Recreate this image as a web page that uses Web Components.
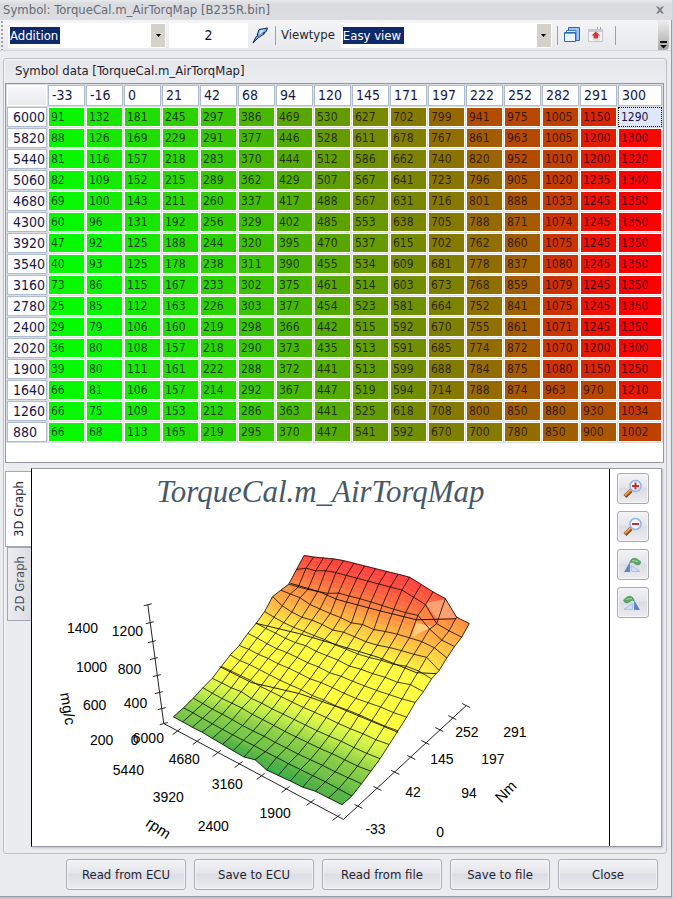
<!DOCTYPE html>
<html lang="en">
<head>
<meta charset="utf-8">
<meta name="viewport" content="width=device-width">
<title>Symbol: TorqueCal.m_AirTorqMap [B235R.bin]</title>
<style>
body{margin:0;background:#ebecef;color:#1e1e32;font:13px/16px "DejaVu Sans Condensed","DejaVu Sans",sans-serif}
</style>
</head>
<body>
<map-window></map-window>

<template id="t-window">
<style>
:host{display:flex;flex-direction:column;min-height:100vh;box-sizing:border-box;border-right:2px solid #d4d5d9;border-bottom:2px solid #c4c5ca;background:#ebecf0;box-shadow:inset -1px -1px #9a9ca4}
header{display:flex;align-items:center;justify-content:space-between;height:20px;padding:0 7px 0 3px;background:linear-gradient(#e8e9eb,#dadbdf 4px,#dcdde0);color:#666a74}
h1{margin:0;font:inherit}
.close{display:flex;padding:0;border:0;background:none}
group-box{margin:7px 5px 0 3px;flex:1}
footer{display:flex;justify-content:flex-end;gap:8px;padding:5px 14px 7px}
footer push-button{flex:0 0 120px}
footer push-button.s{flex-basis:100px}
</style>
<header><h1>Symbol: TorqueCal.m_AirTorqMap [B235R.bin]</h1>
<button class="close" aria-label="Close window"><svg width="10" height="10" viewBox="0 0 10 10"><path d="M1 1.5h2.3L5 3.4l1.7-1.9H9L6.2 5 9 8.5H6.7L5 6.6 3.3 8.5H1L3.8 5z" fill="#7b7e87"/></svg></button></header>
<tool-bar></tool-bar>
<group-box heading="Symbol data [TorqueCal.m_AirTorqMap]">
<map-table></map-table>
<graph-tabs></graph-tabs>
</group-box>
<footer>
<push-button>Read from ECU</push-button><push-button>Save to ECU</push-button><push-button>Read from file</push-button><push-button class="s">Save to file</push-button><push-button class="s">Close</push-button>
</footer>
</template>

<template id="t-toolbar">
<style>
:host{display:flex;align-items:center;height:30px;padding:0 2px 0 8px;margin-right:1px;background:radial-gradient(circle at 2px 2px,#a2a4ac 1px,transparent 1px) 0 4px/4px 4px repeat-y,linear-gradient(#f4f4f6,#e8e9ec);border-bottom:1px solid #d3d4d9}
combo-field{flex:0 0 158px}
combo-field.view{flex-basis:211px;margin-left:6px}
.num{width:79px;height:25px;margin:0 4px 0 3px;padding:0;border:0;background:#fff;text-align:center;font:14px/25px "DejaVu Sans Condensed","DejaVu Sans",sans-serif;color:#111;box-sizing:border-box}
button{display:flex;padding:0;border:0;background:none}
.sep{width:1px;height:19px;background:#9da0a9;margin:0 5px}
.more{margin-left:auto;align-self:stretch;width:11px;align-items:flex-end;justify-content:center;background:linear-gradient(#eeeeef,#a9a8a6);border-radius:0 0 4px 0}
.gap{width:7px}
.execute{margin-right:1px}
</style>
<combo-field label="Operation" value="Addition" mark="50"></combo-field>
<input class="num" type="text" value="2" aria-label="Operand">
<button class="execute" aria-label="Execute"><svg width="17" height="17" viewBox="0 0 17 17"><path d="M7 2.500 15.500 1l-1.200 3.500-3.300 1.900 1.600.2-6.300 4.200L1 15.800l3.200-6.200 2-1-1.200-.4z" fill="#7fa8e4" stroke="#14285c"/><path d="M8 3.500l5-1L7.500 7.500z" fill="#d6e6fb"/></svg></button>
<span class="sep"></span>
<label>Viewtype</label>
<combo-field class="view" label="Viewtype" value="Easy view" mark="61"></combo-field>
<span class="sep"></span>
<button aria-label="Copy"><svg width="18" height="18" viewBox="0 0 18 18"><path d="M5.500 1.500h11v13h-11z" fill="#9fc3ef" stroke="#2a66ae"/><path d="M3.500 4.500h9.500v10H3.500z" fill="#d5e7fb" stroke="#3d7dc6"/><path d="M1.500 6.500h11v9h-11z" fill="#eaf4ff" stroke="#2769b6"/><path d="M2 7.500h10" stroke="#6aa2de"/></svg></button>
<span class="gap"></span>
<button aria-label="Export"><svg width="15" height="16" viewBox="0 0 15 16"><path d="M.5 2.500h14v12H.5z" fill="#f3f4f7" stroke="#c3c7d0"/><path d="M1 3h13v2H1z" fill="#c9ccd4"/><path d="M9 1h1M12 1h1" stroke="#555"/><path d="M7.800 4.500l4.400 4h-2v3H5.500v-3h-2z" fill="#d93636"/><path d="M5 13h7" stroke="#d4d7de"/></svg></button>
<span class="gap"></span>
<span class="sep"></span>
<button class="more" aria-label="More"><svg width="7" height="9" viewBox="0 0 7 9"><path d="M0 1h7" stroke="#111" stroke-width="2"/><path d="M0 4h7L3.500 7.500z" fill="#111"/></svg></button>
</template>

<template id="t-combo">
<style>
:host{display:grid;grid-template-columns:1fr 15px;height:25px;background:#fff;align-items:center}
select{grid-area:1/1/2/3;appearance:none;width:100%;height:17px;border:0;padding:0 0 0 2px;margin:0;outline:0;color:#fff;font:13px/17px "DejaVu Sans Condensed","DejaVu Sans",sans-serif;background:linear-gradient(#0f2a6b,#0f2a6b) 2px 0/var(--mark) 17px no-repeat}
option{color:#000}
i{grid-area:1/2;display:grid;place-items:center;height:23px;width:14px;background:#d4d1c9;pointer-events:none;z-index:1}
</style>
<select></select><i><svg width="5" height="3"><path d="M0 0h5L2.500 3z" fill="#000"/></svg></i>
</template>

<template id="t-group">
<style>
:host{display:block;border:1px solid #bdbfc7;border-radius:3px;box-shadow:inset 1px 1px #f4f5f7;padding:0 4px 4px 1px;background:linear-gradient(#e5e6ea,#ebecf0 24px)}
h2{margin:0;padding:4px 11px 4px 10px;font:13px/16px "DejaVu Sans Condensed","DejaVu Sans",sans-serif}
</style>
<h2></h2><slot></slot>
</template>

<template id="t-table">
<style>
:host{display:block;border:1px solid #9497a2;background:#fff;padding-bottom:19px;margin-right:-2px}
table{width:100%;table-layout:fixed;border-spacing:1px;background:#d9dee4;color:rgba(16,4,40,.76);font-size:12px;line-height:18px}
td,th{padding:0 0 0 2px;border:1px solid #fff;text-align:left;font-weight:400;height:18px;box-sizing:content-box}
th{background:#fff;border-color:#aebccd;color:#16164a;font-size:14px}
thead th{height:19px;line-height:19px;padding-left:3px}
tbody th{padding-left:5px}
thead td{background:linear-gradient(#f8f8fa,#e9eaee)}
td.sel{background:#dfe7fa;border:1px dotted #000;color:#16164a}
</style>
<table><colgroup></colgroup><thead></thead><tbody></tbody></table>
</template>

<template id="t-tabs">
<style>
:host{display:grid;grid-template-columns:26px 1fr;margin-top:5px}
.tabs{display:flex;flex-direction:column;align-items:flex-end;padding-top:3px}
.tabs button{writing-mode:vertical-rl;transform:rotate(180deg);width:26px;height:76px;padding:0;border:1px solid #a4a7b0;border-left:0;background:#fff;color:#1e1e32;font:13px/25px "DejaVu Sans Condensed","DejaVu Sans",sans-serif;text-align:center}
.tabs button+button{width:24px;height:74px;line-height:23px;background:linear-gradient(90deg,#dcdde2,#ededf0);color:#4a4d58}
.panel{display:grid;grid-template-columns:1fr 52px;border:1px solid #9a9da6;border-left:1px solid #000;background:#fff;box-shadow:1px 1px 2px #b8bac1}
.side{display:flex;flex-direction:column;gap:7px;border-left:1px solid #000;padding:4px 0 0 7px}
push-button{width:32px}
</style>
<div class="tabs" role="tablist"><button role="tab" aria-selected="true">3D Graph</button><button role="tab" aria-selected="false">2D Graph</button></div>
<div class="panel"><surface-graph></surface-graph>
<div class="side">
<push-button label="Zoom in"><svg width="20" height="20" viewBox="0 0 20 20"><path d="M2 17.500l6-6" stroke="#8a4a22" stroke-width="4"/><path d="M2 16.500l6-6" stroke="#f0a050" stroke-width="2"/><circle cx="12.500" cy="7" r="5.500" fill="#f1f8ff" stroke="#8fb6df" stroke-width="1.500"/><path d="M9 7h7M12.500 3.500v7" stroke="#d22a2a" stroke-width="2"/></svg></push-button>
<push-button label="Zoom out"><svg width="20" height="20" viewBox="0 0 20 20"><path d="M2 17.500l6-6" stroke="#8a4a22" stroke-width="4"/><path d="M2 16.500l6-6" stroke="#f0a050" stroke-width="2"/><circle cx="12.500" cy="7" r="5.500" fill="#f1f8ff" stroke="#8fb6df" stroke-width="1.500"/><path d="M9 7h7" stroke="#d22a2a" stroke-width="2"/></svg></push-button>
<push-button label="Rotate right"><svg width="20" height="20" viewBox="0 0 20 20"><path d="M1 17L7 7v10z" fill="#5f86c9"/><path d="M8.500 16.500v-6l8.500 6z" fill="#cfe0f6" stroke="#a7c2e8"/><path d="M7 8C7 3 13 1.500 16.500 6L18 7l-1 2c-2 1.500-4 1-5.500-.5C10 7 8.500 7 7 8z" fill="#5dab61" stroke="#3d8a47" stroke-width=".6"/><path d="M9 5.500l6 1" stroke="#a5d6a0"/></svg></push-button>
<push-button label="Rotate left"><svg width="20" height="20" viewBox="0 0 20 20"><path d="M17 17L11 7v10z" fill="#5f86c9"/><path d="M9.500 16.500v-6l-8.500 6z" fill="#cfe0f6" stroke="#a7c2e8"/><path d="M11 8C11 3 5 1.500 2 6L.5 7l1 2c2 1.500 4 1 5.500-.5C8.500 7 9.500 7 11 8z" fill="#5dab61" stroke="#3d8a47" stroke-width=".6"/><path d="M9 5.500l-6 1" stroke="#a5d6a0"/></svg></push-button>
</div></div>
</template>

<template id="t-button">
<style>
:host{display:block;height:31px}
button{display:grid;place-items:center;width:100%;height:100%;padding:0;border:1px solid #a9abb4;border-radius:3px;background:linear-gradient(#f3f3f6,#e4e5ea 45%,#dcdde4 50%,#ececf0);box-shadow:inset 0 0 0 1px #f5f5f8;color:#1e1e32;font:13px/16px "DejaVu Sans Condensed","DejaVu Sans",sans-serif}
</style>
<button><slot></slot></button>
</template>

<script>
const MAP = {
  nm: [-33,-16,0,21,42,68,94,120,145,171,197,222,252,282,291,300],
  rpm: [6000,5820,5440,5060,4680,4300,3920,3540,3160,2780,2400,2020,1900,1640,1260,880],
  z: `91 132 181 245 297 386 469 530 627 702 799 941 975 1005 1150 1290
88 126 169 229 291 377 446 528 611 678 767 861 963 1005 1200 1300
81 116 157 218 283 370 444 512 586 662 740 820 952 1010 1200 1320
82 109 152 215 289 362 429 507 567 641 723 796 905 1020 1235 1340
69 100 143 211 260 337 417 488 567 631 716 801 888 1033 1245 1350
60 96 131 192 256 329 402 485 553 638 705 788 871 1074 1245 1350
47 92 125 188 244 320 395 470 537 615 702 762 860 1075 1245 1350
40 93 125 178 238 311 390 455 534 609 681 778 837 1080 1245 1350
73 86 115 167 233 302 375 461 514 603 673 768 859 1079 1245 1350
25 85 112 163 226 303 377 454 523 581 664 752 841 1075 1245 1350
29 79 106 160 219 298 366 442 515 592 670 755 861 1071 1245 1350
36 80 108 157 218 290 373 435 513 591 685 774 872 1070 1200 1300
39 80 111 161 222 288 372 441 513 599 688 784 875 1080 1150 1250
66 81 106 157 214 292 367 447 519 594 714 788 874 963 970 1210
66 75 109 153 212 286 363 441 525 618 708 800 850 880 930 1034
66 68 113 165 219 295 370 447 541 592 670 700 780 850 900 1002`.split('\n').map(r => r.split(' ').map(Number))
};

class Base extends HTMLElement {
  mount(id) {
    const root = this.attachShadow({mode: 'open'});
    root.append(document.getElementById(id).content.cloneNode(true));
    return root;
  }
}

customElements.define('push-button', class extends Base {
  connectedCallback() {
    const b = this.mount('t-button').querySelector('button');
    if (this.hasAttribute('label')) b.setAttribute('aria-label', this.getAttribute('label'));
  }
});

customElements.define('combo-field', class extends Base {
  connectedCallback() {
    const s = this.mount('t-combo').querySelector('select');
    s.add(new Option(this.getAttribute('value')));
    s.setAttribute('aria-label', this.getAttribute('label'));
    s.style.setProperty('--mark', this.getAttribute('mark') + 'px');
  }
});

customElements.define('tool-bar', class extends Base {
  connectedCallback() {
    const r = this.mount('t-toolbar');
    r.querySelector('label').onclick = () => r.querySelector('.view').shadowRoot.querySelector('select').focus();
  }
});

customElements.define('group-box', class extends Base {
  connectedCallback() { this.mount('t-group').querySelector('h2').textContent = this.getAttribute('heading'); }
});

customElements.define('map-table', class extends Base {
  connectedCallback() {
    const r = this.mount('t-table');
    r.querySelector('colgroup').innerHTML = '<col style="width:40px">' + '<col style="width:37px">'.repeat(15) + '<col style="width:44px">';
    r.querySelector('thead').innerHTML = '<tr><td></td>' + MAP.nm.map(n => `<th scope="col">${n}</th>`).join('') + '</tr>';
    r.querySelector('tbody').innerHTML = MAP.z.map((row, i) => `<tr><th scope="row">${MAP.rpm[i]}</th>` + row.map((v, j) => {
      if (!i && j === 15) return `<td class="sel">${v}</td>`;
      const red = Math.max(0, Math.min(255, Math.round(v * 255 / 1350)));
      const k = v < 95 ? Math.round(red / 2) : red;
      return `<td style="background:rgb(${k},${255 - k},0)">${v}</td>`;
    }).join('') + '</tr>').join('');
  }
});

customElements.define('graph-tabs', class extends Base {
  connectedCallback() { this.mount('t-tabs'); }
});

/* Perspective projection of (rpm index, Nm index, mg/c) to the drawing plane. */
const project = (u, v, z) => {
  z /= 100;
  const w = -0.0118871 * u + 0.0136345 * v - 0.00495033 * z + 1;
  return [300 + (10.7107 * u + 8.74836 * v - 0.00941867 * z - 125.8) / w,
          700 + (4.46584 * u - 5.64998 * v - 8.1064 * z + 24.5773) / w];
};
const STOPS = [[25,50,178,70],[66,82,178,66],[91,112,194,70],[160,145,210,70],[215,190,235,70],[290,232,250,70],[370,255,255,60],[660,255,255,66],[740,255,228,66],[800,255,205,66],[900,255,172,66],[1010,255,140,66],[1150,255,102,64],[1300,255,70,64],[1400,255,60,60]];
const shade = z => {
  let i = 1;
  while (i < STOPS.length - 1 && z > STOPS[i][0]) i++;
  const a = STOPS[i - 1], b = STOPS[i], t = Math.max(0, Math.min(1, (z - a[0]) / (b[0] - a[0])));
  return `rgb(${[1, 2, 3].map(k => Math.round(a[k] + (b[k] - a[k]) * t))})`;
};
const height = (u, v) => {
  const j = Math.min(14, Math.floor(v)), t = v - j;
  return MAP.z[u][j] * (1 - t) + MAP.z[u][j + 1] * t;
};
const pt = (u, v) => project(u, v, height(u, v)).map(n => n.toFixed(1)).join();

customElements.define('surface-graph', class extends HTMLElement {
  connectedCallback() {
    let fills = '', lines = '';
    for (let v = 15 - .25; v >= 0; v -= .25) for (let u = 0; u < 15; u++) {
      const c = shade((height(u, v + .125) + height(u + 1, v + .125)) / 2);
      fills += `<path d="M${pt(u, v)}L${pt(u + 1, v)}L${pt(u + 1, v + .25)}L${pt(u, v + .25)}z" fill="${c}" stroke="${c}" stroke-width=".6"/>`;
    }
    const idx = [...Array(16).keys()];
    for (const k of idx) lines += 'M' + idx.map(u => pt(u, k)).join('L') + 'M' + idx.map(v => pt(k, v)).join('L');
    const tick = (pts, dx, dy) => pts.map(([x, y]) => `M${x - dx} ${y - dy}l${2 * dx} ${2 * dy}`).join('');
    const axes = 'M148 605L164 724L344 820L467 706'
      + tick([[148,605],[150,623],[152,642],[154,659],[157,676],[159,693],[162,709],[164,724]], 4, -1)
      + tick([[177,732],[197,742],[217,754],[239,765],[261,777],[286,790],[311,803],[337,818]], 4, -3)
      + tick([[359,807],[378,789],[396,773],[412,758],[426,743],[440,730],[453,718],[467,706]], 4, 2);
    const labels = [[67,633,1400],[112,636,1200],[76,672,1000],[118,674,800],[83,710,600],[124,708,400],[90,745,200],[131,745,0],
      [133,743,6000],[113,776,5440],[169,765,4680],[153,803,3920],[212,790,3160],[198,832,2400],[260,819,1900],
      [366,835,-33],[437,838,0],[406,798,42],[462,799,94],[431,765,145],[482,765,197],[456,737,252],[504,737,291]]
      .map(([x, y, t]) => `<text x="${x}" y="${y}">${t}</text>`).join('');
    this.attachShadow({mode: 'open'}).innerHTML = `<style>
:host{display:block}
svg{display:block;width:100%;height:auto;font:14px "Liberation Sans",sans-serif}
.title{font:italic 31px "Liberation Serif",serif;fill:#44586a}
.axis{font-size:15px}
</style>
<svg viewBox="32 469 578 378" role="img" aria-label="Torque surface">
<text class="title" x="321" y="502" text-anchor="middle">TorqueCal.m_AirTorqMap</text>
${fills}
<path d="M426 603.500L437.500 601L446.500 599.500L457.500 618.500L438 619z" fill="#ffa070"/>
<path d="M417 623L433 627L413 637z" fill="#ffcc7a"/>
<path d="${lines}" fill="none" stroke="#000" stroke-width=".9" stroke-opacity=".85"/>
<path d="M291 583.500L320 592L337 599.500L380 611L417 620L457 619M256 623.500L300 634L337 645L380 658L417 673L437 674M220 667L252 683L300 694L337 707L399 733" fill="none" stroke="#000" stroke-opacity=".85"/>
<path d="${axes}" fill="none" stroke="#222"/>
${labels}
<text class="axis" transform="translate(60 694) rotate(80)">mg/c</text>
<text class="axis" transform="translate(145 826) rotate(33)">rpm</text>
<text class="axis" transform="translate(502 804) rotate(-45)">Nm</text>
</svg>`;
  }
});

customElements.define('map-window', class extends Base {
  connectedCallback() { this.mount('t-window'); }
});
</script>
</body>
</html>
